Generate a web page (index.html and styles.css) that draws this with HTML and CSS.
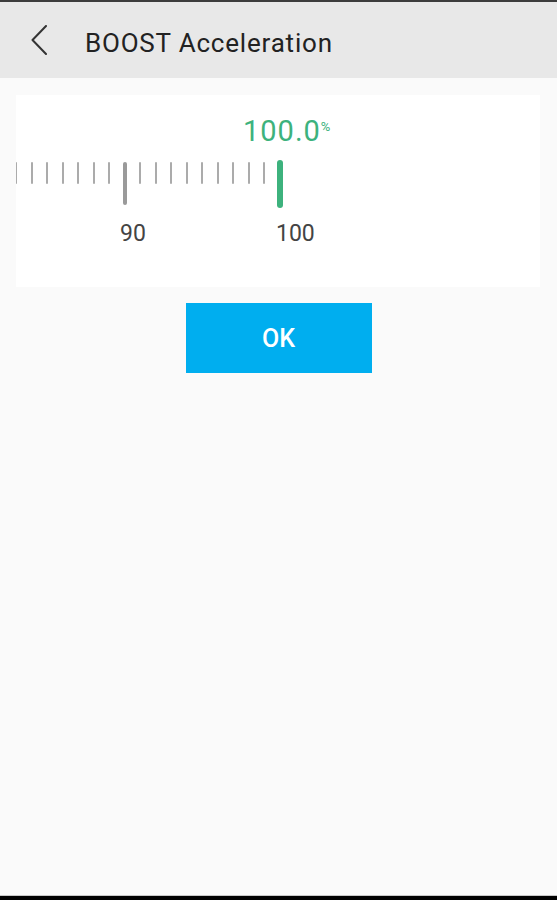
FILE: index.html
```html
<!DOCTYPE html>
<html lang="en">
<head>
    <meta charset="UTF-8">
    <meta name="viewport" content="width=device-width, initial-scale=1.0">
    <title>BOOST Acceleration</title>
    <link rel="stylesheet" href="styles.css">
</head>
<body>
<header class="topbar">
    <button class="back" aria-label="Back">
        <svg width="16" height="30" viewBox="0 0 16 30">
            <polyline points="15,1 1.5,15 15,29" fill="none" stroke="#333" stroke-width="2" stroke-linecap="round" stroke-linejoin="round"/>
        </svg>
    </button>
    <h1 class="title">BOOST Acceleration</h1>
</header>
<main class="content">
    <section class="card">
        <div class="value">100.0<span class="unit">%</span></div>
        <div class="ruler">
            <span class="cell"><i class="tick"></i></span>
            <span class="cell"><i class="tick"></i></span>
            <span class="cell"><i class="tick"></i></span>
            <span class="cell"><i class="tick"></i></span>
            <span class="cell"><i class="tick"></i></span>
            <span class="cell"><i class="tick"></i></span>
            <span class="cell"><i class="tick"></i></span>
            <span class="cell"><i class="tick major"></i></span>
            <span class="cell"><i class="tick"></i></span>
            <span class="cell"><i class="tick"></i></span>
            <span class="cell"><i class="tick"></i></span>
            <span class="cell"><i class="tick"></i></span>
            <span class="cell"><i class="tick"></i></span>
            <span class="cell"><i class="tick"></i></span>
            <span class="cell"><i class="tick"></i></span>
            <span class="cell"><i class="tick"></i></span>
            <span class="cell"><i class="tick"></i></span>
            <span class="cell"><i class="tick current"></i></span>
        </div>
        <div class="labels">
            <span class="label">90</span>
            <span class="label">100</span>
        </div>
    </section>
    <button class="ok">OK</button>
</main>
<div class="navedge"></div>
</body>
</html>
```

FILE: styles.css
```css
html, body {
    height: 100%;
}

body {
    margin: 0;
    font-family: Roboto, "Noto Sans", Arial, sans-serif;
    background-color: #fafafa;
    display: flex;
    flex-direction: column;
}

.topbar {
    display: flex;
    align-items: center;
    height: 71px;
    padding-top: 5px;
    border-top: 2px solid #3c3c3c;
    background-color: #e8e8e8;
}

.back {
    background: none;
    border: none;
    padding: 0;
    margin: 0 38px 6px 31px;
    width: 16px;
    height: 30px;
    display: flex;
    cursor: pointer;
}

.title {
    margin: 0;
    font-size: 26px;
    font-weight: 400;
    letter-spacing: 0.8px;
    color: #222;
}

.content {
    flex: 1;
    display: flex;
    flex-direction: column;
    align-items: center;
    padding-top: 17px;
}

.card {
    align-self: stretch;
    margin: 0 17px 0 16px;
    padding: 19px 0 40px;
    background-color: #fff;
    overflow: hidden;
}

.value {
    padding-left: 227px;
    font-size: 29px;
    line-height: 34px;
    color: #3db27d;
    letter-spacing: 1px;
}

.unit {
    font-size: 13px;
    line-height: 12px;
    vertical-align: 10px;
    letter-spacing: 0;
}

.ruler {
    display: flex;
    align-items: flex-start;
    margin: 12px 0 0 -7.5px;
    height: 48px;
}

.cell {
    width: 15.5px;
    flex: none;
    display: flex;
    justify-content: center;
    padding-top: 2px;
}

.tick {
    display: block;
    width: 2px;
    height: 22px;
    background-color: #ababab;
    border-radius: 1px;
}

.tick.major {
    width: 4px;
    height: 43px;
    background-color: #9a9a9a;
    border-radius: 2px;
}

.tick.current {
    width: 6px;
    height: 48px;
    margin-top: -2px;
    background-color: #3db27d;
    border-radius: 3px;
}

.labels {
    display: flex;
    margin-top: 12px;
    padding-left: 104px;
}

.label {
    width: 156px;
    font-size: 23px;
    line-height: 27px;
    color: #444;
}

.ok {
    margin-top: 16px;
    width: 186px;
    height: 70px;
    border: none;
    background-color: #00aeef;
    color: #fff;
    font-family: inherit;
    font-size: 25px;
    font-weight: 500;
    cursor: pointer;
}

.navedge {
    height: 4px;
    border-top: 1px solid #c8c8c8;
    background-color: #000;
}
```
